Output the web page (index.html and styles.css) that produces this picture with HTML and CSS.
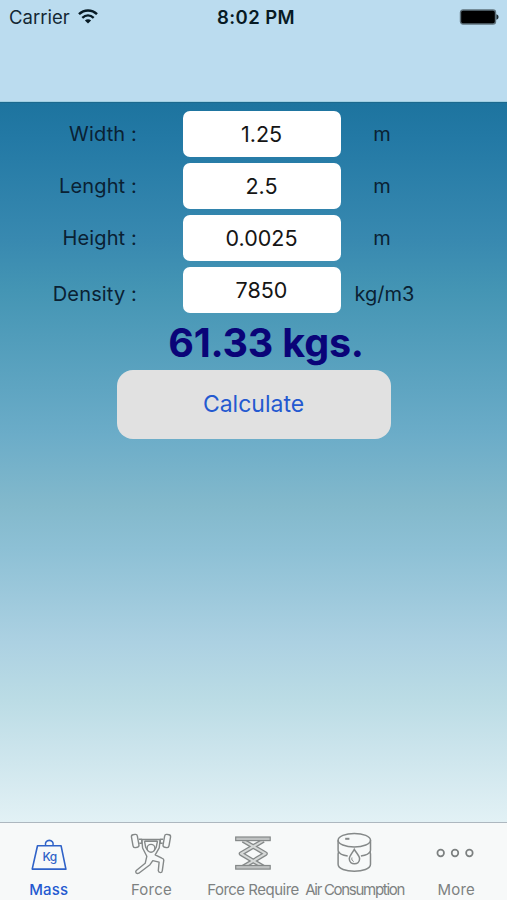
FILE: index.html
```
<!DOCTYPE html>
<html lang="en">
<head>
    <meta charset="UTF-8">
    <meta name="viewport" content="width=device-width, initial-scale=1.0">
    <link rel="stylesheet" href="styles.css">
    <title>Mass</title>
</head>
<body>
    <header class="topbar">
        <div class="status">
            <div class="carrier">
                <span>Carrier</span>
                <svg class="wifi" viewBox="0 0 20 15" width="20" height="15">
                    <path d="M1 5.2C6.2.2 13.8.2 19 5.2" fill="none" stroke="#071a24" stroke-width="2.5"/>
                    <path d="M4.3 8.9c3.4-3.2 8-3.2 11.4 0" fill="none" stroke="#071a24" stroke-width="2.4"/>
                    <path d="M6.9 11.5c1.8-1.8 4.4-1.8 6.2 0L10 14.6z" fill="#071a24"/>
                </svg>
            </div>
            <div class="time">8:02 PM</div>
            <div class="battery">
                <svg viewBox="0 0 40 16" width="40" height="16">
                    <rect x="1.5" y="1" width="35" height="14" rx="2.5" fill="#000" stroke="#5f727c" stroke-width="1.4"/>
                    <path d="M37.4 5.3c2.8.6 2.8 4.8 0 5.4z" fill="#1c2a31"/>
                </svg>
            </div>
        </div>
    </header>

    <main class="content">
        <div class="row">
            <label for="width">Width :</label>
            <input id="width" type="text" value="1.25">
            <span class="unit">m</span>
        </div>
        <div class="row">
            <label for="lenght">Lenght :</label>
            <input id="lenght" type="text" value="2.5">
            <span class="unit">m</span>
        </div>
        <div class="row">
            <label for="height">Height :</label>
            <input id="height" type="text" value="0.0025">
            <span class="unit">m</span>
        </div>
        <div class="row density">
            <label for="density">Density :</label>
            <input id="density" type="text" value="7850">
            <span class="unit">kg/m3</span>
        </div>
        <div class="result">61.33 kgs.</div>
        <button class="calculate">Calculate</button>
    </main>

    <nav class="tabs">
        <a class="tab active">
            <svg viewBox="0 0 44 44" width="44" height="44" fill="none" stroke="#2f62c8" stroke-width="1.6">
                <path d="M10.5 14.8h23.6l4.8 23.3H5.2z" stroke-linejoin="round"/>
                <path d="M18.6 14.6c-2-7 9.4-7 7.4 0"/>
                <text x="22.5" y="30.3" class="kg">Kg</text>
            </svg>
            <span>Mass</span>
        </a>
        <a class="tab">
            <svg viewBox="0 0 44 44" width="44" height="44" fill="none" stroke="#858989" stroke-width="1.4" stroke-linejoin="round">
                <rect x="3.2" y="3.5" width="6" height="13" rx="2" transform="rotate(-10 6.2 10)"/>
                <rect x="34.8" y="3.5" width="6" height="13" rx="2" transform="rotate(10 37.8 10)"/>
                <path d="M9.8 8.2h3v4h-2.5M34.2 8.2h-3v4h2.5M13 8.5h18M15.5 10.2h13"/>
                <circle cx="22" cy="17.3" r="3.9"/>
                <path d="M12.8 8.5l.8 8.5 4.2 8.3-1.6 7-8.9 7.2c-1.6 2 .5 3.7 2.5 2.7l11.2-8.5 2.8-4.1 6.3 1.5-.8 8.6c.3 2.5 3.8 2.5 4 0l1.5-10.6c-.1-1-1-1.7-2-2l-6.6-3.2 4-7.1 1-8.3M15.5 10.2l1.2 6.1 2.3 3.5M28.5 10.2l-1.3 6.1-2.3 3.5"/>
            </svg>
            <span>Force</span>
        </a>
        <a class="tab">
            <svg viewBox="0 0 44 44" width="44" height="44" stroke="#858989" stroke-width="1.2">
                <g fill="none" stroke-linejoin="round">
                    <path d="M12 9.5l22.5 13.2L12 36M32.5 9.5L10 22.7 32.5 36" stroke-width="4.6"/>
                    <path d="M12 9.5l22.5 13.2L12 36M32.5 9.5L10 22.7 32.5 36" stroke="#d6d9d8" stroke-width="2"/>
                </g>
                <rect x="4.7" y="6" width="34.5" height="3.6" fill="#bfc2c2"/>
                <rect x="4.7" y="34.5" width="34.5" height="3.6" fill="#bfc2c2"/>
            </svg>
            <span class="tight">Force Require</span>
        </a>
        <a class="tab">
            <svg viewBox="0 0 44 44" width="44" height="44" fill="none" stroke="#858989" stroke-width="1.5">
                <ellipse cx="21.3" cy="9.2" rx="16.2" ry="6.8"/>
                <path d="M5.1 9.2v9.5c0 1.8.8 2.6 0 4.2v10.3c0 9.3 32.4 9.3 32.4 0V22.9c-.8-1.6 0-2.4 0-4.2V9.2M5.2 20c1 3 5.4 4.5 9.5 5M37.4 20c-1 3-5.4 4.5-9.5 5"/>
                <path d="M21.3 18.3c-2 3.7-5 6.5-5 9.5 0 6.7 10.3 6.7 10.3 0 0-3-3.3-5.8-5.3-9.5z"/>
                <path d="M19 26.5c-.7 2 .2 3.4 1.7 4" stroke-width="1"/>
                <path d="M12.2 7.8h4.2" stroke-width="2"/>
            </svg>
            <span class="tighter">Air Consumption</span>
        </a>
        <a class="tab">
            <svg viewBox="0 0 44 44" width="44" height="44" fill="none" stroke="#7c8080" stroke-width="1.7">
                <circle cx="6.7" cy="22" r="3.3"/>
                <circle cx="21" cy="22" r="3.3"/>
                <circle cx="35.4" cy="22" r="3.3"/>
            </svg>
            <span>More</span>
        </a>
    </nav>
</body>
</html>
```
FILE: styles.css
```
* {
    box-sizing: border-box;
}

body {
    margin: 0;
    height: 900px;
    display: flex;
    flex-direction: column;
    font-family: Inter, "Liberation Sans", sans-serif;
    color: #0a2133;
}

.topbar {
    height: 102px;
    background-color: #bbdcef;
    border-bottom: 1px solid #a0cfe2;
}

.status {
    display: grid;
    grid-template-columns: 1fr auto 1fr;
    align-items: center;
    height: 34px;
    padding: 0 8px 0 9px;
    font-size: 18.5px;
    color: #142733;
}

.carrier {
    display: flex;
    align-items: center;
    gap: 8px;
}

.wifi {
    margin-bottom: 2px;
}

.time {
    font-weight: 600;
    letter-spacing: 0.4px;
    color: #071a24;
    padding-left: 4px;
}

.battery {
    display: flex;
    justify-content: flex-end;
}

.content {
    flex: 1;
    display: flex;
    flex-direction: column;
    padding-top: 7.6px;
    background-image: linear-gradient(#1d749f 0%, #2379a5 5%, #3889b0 19%, #4495b4 26%, #6bacc8 46%, #83b9cc 56%, #8dc0d5 62%, #acd1e2 75%, #bbdce5 83%, #c9e3eb 89%, #e2f1f5 100%);
    border-top: 1px solid #1c698e;
}

.row {
    display: grid;
    grid-template-columns: 137px 158px 83px;
    column-gap: 45.5px;
    align-items: center;
    height: 46px;
    margin-bottom: 6.3px;
    font-size: 20px;
}

.row label {
    text-align: right;
    letter-spacing: 0.15px;
}

.row input {
    width: 158px;
    height: 46px;
    padding: 0;
    border: none;
    border-radius: 7px;
    background-color: #fff;
    font-family: inherit;
    font-size: 21.5px;
    color: #151515;
    text-align: center;
}

.unit {
    width: 83px;
    margin-left: -45.5px;
    text-align: center;
}

.density label,
.density .unit {
    padding-top: 7px;
}

.density .unit {
    padding-left: 5px;
}

.result {
    height: 50px;
    line-height: 46px;
    padding-left: 25px;
    text-align: center;
    font-size: 39.5px;
    font-weight: 700;
    letter-spacing: -0.2px;
    color: #0a0478;
}

.calculate {
    align-self: center;
    width: 274px;
    height: 69px;
    border: none;
    border-radius: 16px;
    background-color: #e1e1e1;
    font-family: inherit;
    font-size: 23px;
    color: #2459d0;
}

.tabs {
    display: grid;
    grid-template-columns: repeat(5, 1fr);
    height: 78px;
    margin-left: -1px;
    background-color: #f7f9f9;
    border-top: 1px solid #adb7bf;
}

.tab {
    display: flex;
    flex-direction: column;
    align-items: center;
    padding-top: 8px;
    font-size: 15px;
    line-height: 18px;
    color: #7d8181;
    white-space: nowrap;
}

.tab:first-child {
    padding-right: 2px;
}

.tab span {
    margin-top: 6px;
    letter-spacing: 0.2px;
}

.active {
    color: #2459d0;
}

.active span {
    font-weight: 500;
}

.kg {
    font-size: 12px;
    font-weight: 500;
    text-anchor: middle;
    letter-spacing: -0.5px;
    fill: #2f62c8;
    stroke: none;
}

.tab .tight {
    letter-spacing: -0.5px;
}

.tab .tighter {
    letter-spacing: -1.3px;
}
```
